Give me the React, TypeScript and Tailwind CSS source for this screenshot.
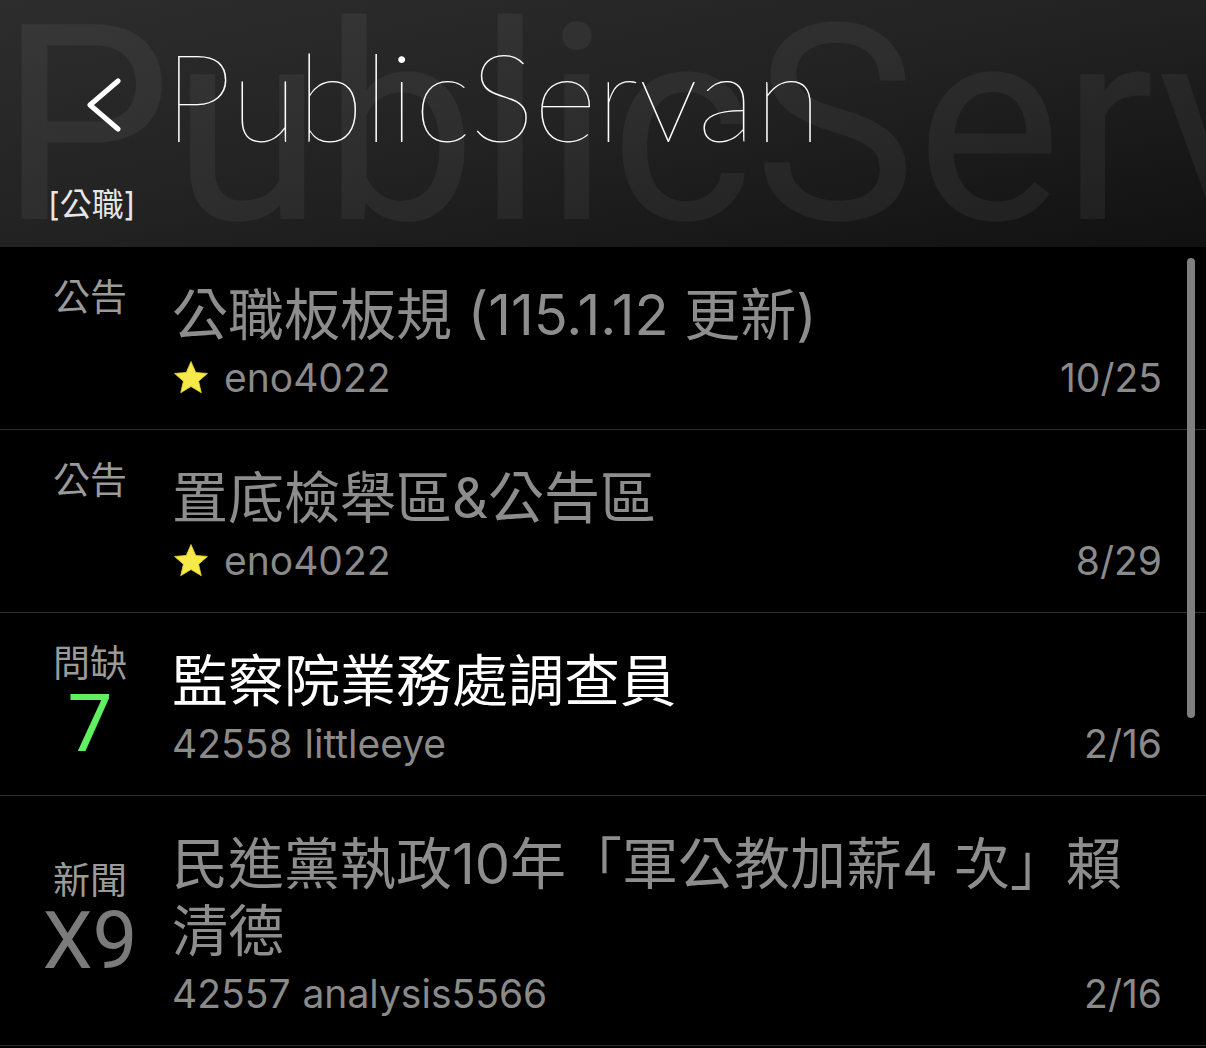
type Post = {
  tag: string
  count?: string
  countColor?: string
  title: string
  titleColor: string
  author: string
  id?: string
  star?: boolean
  date: string
}

const posts: Post[] = [
  {
    tag: '公告',
    title: '公職板板規 (115.1.12 更新)',
    titleColor: 'text-[#8d8d8d]',
    author: 'eno4022',
    star: true,
    date: '10/25',
  },
  {
    tag: '公告',
    title: '置底檢舉區&公告區',
    titleColor: 'text-[#8d8d8d]',
    author: 'eno4022',
    star: true,
    date: '8/29',
  },
  {
    tag: '問缺',
    count: '7',
    countColor: 'text-[#5ff05f]',
    title: '監察院業務處調查員',
    titleColor: 'text-white',
    author: 'littleeye',
    id: '42558',
    date: '2/16',
  },
  {
    tag: '新聞',
    count: 'X9',
    countColor: 'text-[#7b7b7b]',
    title: '民進黨執政10年「軍公教加薪4 次」賴清德',
    titleColor: 'text-[#8d8d8d]',
    author: 'analysis5566',
    id: '42557',
    date: '2/16',
  },
]

function Star() {
  return (
    <svg viewBox="0 0 24 24" className="h-[38px] w-[38px] shrink-0">
      <path
        d="M12 1.6l3 6.9 7.4.6-5.6 4.9 1.7 7.3L12 17.4l-6.5 3.9 1.7-7.3L1.6 9.1 9 8.5z"
        fill="#f6ea4a"
        stroke="#e6d42e"
        strokeWidth="0.5"
        strokeLinejoin="round"
      />
    </svg>
  )
}

function PostRow({ post }: { post: Post }) {
  return (
    <div className="flex border-b border-[#2f2f2f]">
      <div className="flex w-[172px] shrink-0 flex-col items-center justify-center pl-[8px]">
        <span className="text-[37px] leading-[40px] text-[#9a9a9a]">{post.tag}</span>
        <span
          className={`h-[80px] font-['Roboto',sans-serif] text-[80px] leading-[80px] ${post.countColor ?? ''}`}
        >
          {post.count}
        </span>
      </div>
      <div className="min-w-0 flex-1 pt-[35px] pr-[44px] pb-[24px]">
        <div className={`text-[56px] leading-[67px] ${post.titleColor}`}>{post.title}</div>
        <div className="mt-[2px] flex h-[54px] items-center justify-between text-[39px] text-[#8a8a8a]">
          <div className="flex items-center gap-[14px]">
            {post.star && <Star />}
            {post.id && <span>{post.id}</span>}
            <span className={post.id ? '-ml-[2px]' : ''}>{post.author}</span>
          </div>
          <span>{post.date}</span>
        </div>
      </div>
    </div>
  )
}

export default function App() {
  return (
    <div className="relative h-[1048px] w-[1206px] overflow-hidden bg-black font-['Inter','Noto_Sans_CJK_TC',sans-serif]">
      <header className="relative h-[247px] overflow-hidden bg-linear-to-br from-[#2d2d2d] via-[#222222] to-[#111111]">
        <div
          aria-hidden
          className="absolute -left-[1px] -top-[11px] whitespace-nowrap font-['Roboto',sans-serif] text-[274px] leading-none text-white/[0.05]"
        >
          PublicServ
        </div>
        <div className="relative flex items-start pt-[34px] pl-[85px]">
          <svg viewBox="0 0 36 54" className="mt-[44px] h-[54px] w-[36px]">
            <path
              d="M33 3 L5 27 L33 51"
              fill="none"
              stroke="white"
              strokeWidth="5"
              strokeLinecap="round"
              strokeLinejoin="round"
            />
          </svg>
          <span className="ml-[43px] font-['Lato',sans-serif] text-[122px] leading-none font-thin text-white">
            PublicServan
          </span>
        </div>
        <div className="relative mt-[31px] ml-[48px] text-[32px] leading-[36px] text-[#e6e6e6]">[公職]</div>
      </header>

      <main>
        {posts.map((post, i) => (
          <PostRow key={i} post={post} />
        ))}
      </main>

      <div className="absolute top-[258px] right-[11px] h-[460px] w-[8px] rounded-full bg-[#7e7e7e]" />
    </div>
  )
}
